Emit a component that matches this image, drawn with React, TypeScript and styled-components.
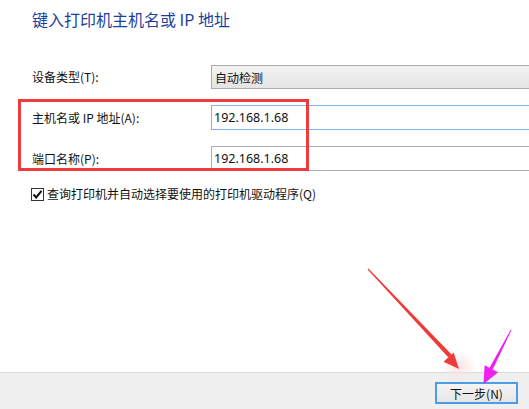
import React from "react";
import styled, { createGlobalStyle } from "styled-components";

const Global = createGlobalStyle`
  html, body { margin: 0; padding: 0; background: #ffffff; overflow: hidden; }
  body { font-family: "Noto Sans CJK SC", "Noto Sans", sans-serif; }
`;

const Page = styled.div`
  position: relative;
  width: 529px;
  height: 409px;
  display: flex;
  flex-direction: column;
  overflow: hidden;
  background: #ffffff;
`;

const Content = styled.div`
  flex: 1;
  padding: 7px 0 0 32px;
  display: flex;
  flex-direction: column;
`;

const Title = styled.div`
  font-size: 16px;
  line-height: 24px;
  color: #1d3f9c;
  white-space: nowrap;
`;

const Form = styled.div`
  margin-top: 34px;
  display: grid;
  grid-template-columns: 179px 340px;
  row-gap: 16px;
  align-items: center;
`;

const Label = styled.div`
  font-size: 12px;
  line-height: 16px;
  color: #111;
  white-space: nowrap;
`;

const Combo = styled.div`
  box-sizing: border-box;
  height: 24px;
  border: 1px solid #acacac;
  background: linear-gradient(#f2f2f2, #e4e4e4);
  display: flex;
  align-items: center;
  padding-left: 3px;
  font-size: 12px;
  color: #111;
`;

const Input = styled.div<{ $focused?: boolean }>`
  box-sizing: border-box;
  height: 25px;
  border: 1px solid ${(p) => (p.$focused ? "#7eb4ea" : "#abadb3")};
  background: #fff;
  display: flex;
  align-items: center;
  padding-left: 2px;
  font-family: "Noto Sans", sans-serif;
  font-size: 12.5px;
  color: #111;
`;

const CheckRow = styled.label`
  margin-top: 15px;
  margin-left: -1px;
  display: flex;
  align-items: center;
  gap: 3px;
  font-size: 12px;
  line-height: 16px;
  color: #111;
  white-space: nowrap;
`;

const Box = styled.span`
  box-sizing: border-box;
  width: 13px;
  height: 13px;
  border: 1px solid #333;
  background: #fff;
  display: flex;
  align-items: center;
  justify-content: center;
`;

const Footer = styled.div`
  box-sizing: border-box;
  height: 37px;
  flex: none;
  border-top: 1px solid #dadada;
  background: #efefef;
  display: flex;
  justify-content: flex-end;
  align-items: flex-start;
  padding: 9px 11px 0 0;
`;

const Button = styled.div`
  box-sizing: border-box;
  width: 83px;
  height: 22px;
  border: 2px solid #4a9de6;
  background: linear-gradient(#f4f4f4, #e6e6e6);
  display: flex;
  align-items: center;
  justify-content: center;
  font-size: 12px;
  color: #111;
`;

const RedBox = styled.div`
  position: absolute;
  left: 18px;
  top: 99px;
  width: 291px;
  height: 72px;
  box-sizing: border-box;
  border: 3px solid #ef3b3b;
  pointer-events: none;
`;

const Blob = styled.div`
  position: absolute;
  left: 440px;
  top: 352px;
  width: 38px;
  height: 30px;
  border-radius: 50%;
  background: radial-gradient(closest-side, rgba(250, 225, 225, 0.9), rgba(255, 255, 255, 0));
  pointer-events: none;
`;

const Overlay = styled.svg`
  position: absolute;
  left: 0;
  top: 0;
  pointer-events: none;
`;

export default function App() {
  return (
    <Page>
      <Global />
      <Content>
        <Title>键入打印机主机名或 IP 地址</Title>
        <Form>
          <Label>设备类型(T):</Label>
          <Combo>自动检测</Combo>
          <Label>主机名或 IP 地址(A):</Label>
          <Input $focused>192.168.1.68</Input>
          <Label>端口名称(P):</Label>
          <Input>192.168.1.68</Input>
        </Form>
        <CheckRow>
          <Box>
            <svg width="11" height="11" viewBox="0 0 11 11">
              <path d="M1.5 5.5 L4.2 8.4 L9.5 1.8" fill="none" stroke="#111" strokeWidth="2" />
            </svg>
          </Box>
          查询打印机并自动选择要使用的打印机驱动程序(Q)
        </CheckRow>
      </Content>
      <Footer>
        <Button>下一步(N)</Button>
      </Footer>
      <RedBox />
      <Blob />
      <Overlay width="529" height="409" viewBox="0 0 529 409">
        <polygon points="367.6,269.4 368.4,268.6 451.6,354.6 448.4,357.4" fill="#f03a3a" />
        <polygon points="459,369 443.6,361.8 453.6,352.6" fill="#f03a3a" />
        <polygon points="510.6,329.8 511.4,330.2 492.6,369.8 489.4,368.0" fill="#ee22ee" />
        <polygon points="483.5,384 484.6,365.2 498.2,372.2" fill="#ee22ee" />
      </Overlay>
    </Page>
  );
}
